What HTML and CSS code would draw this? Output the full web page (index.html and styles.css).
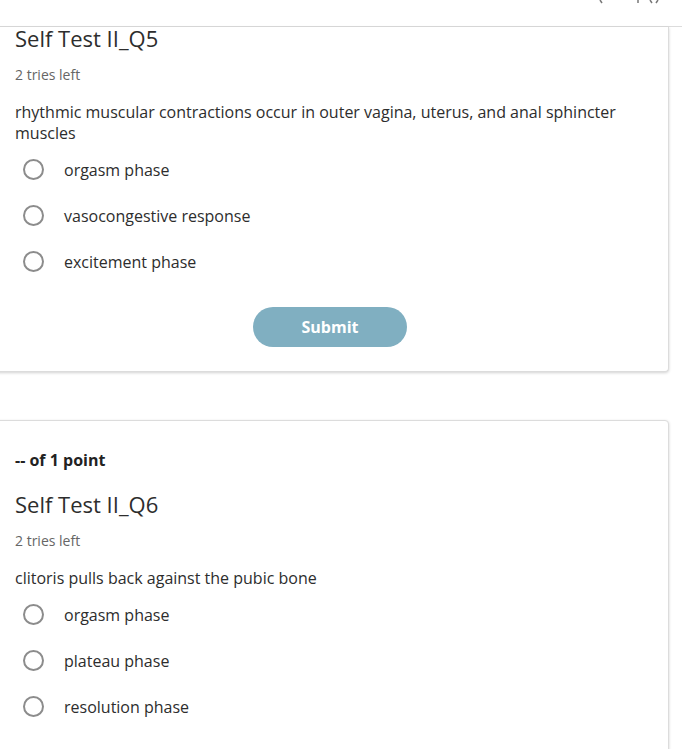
FILE: index.html
```html
<!DOCTYPE html>
<html lang="en">
<head>
<meta charset="utf-8">
<title>Self Test II</title>
<link rel="stylesheet" href="styles.css">
</head>
<body>
<header class="topbar">
  <svg class="topbar-icons" width="70" height="4" viewBox="0 0 70 4" aria-hidden="true">
    <path d="M8 0 L10 3" stroke="#777" stroke-width="1.5" fill="none"/>
    <path d="M46 0 L46 3" stroke="#777" stroke-width="1.5" fill="none"/>
    <path d="M58 0 L60 3 M64 3 L66 0" stroke="#777" stroke-width="1.5" fill="none"/>
  </svg>
</header>
<main class="quiz">
  <section class="card card-first">
    <h2 class="q-title q-title-first">Self Test II_Q5</h2>
    <p class="tries">2 tries left</p>
    <p class="question">rhythmic muscular contractions occur in outer vagina, uterus, and anal sphincter muscles</p>
    <ul class="options">
      <li class="option"><span class="radio"></span><span>orgasm phase</span></li>
      <li class="option"><span class="radio"></span><span>vasocongestive response</span></li>
      <li class="option"><span class="radio"></span><span>excitement phase</span></li>
    </ul>
    <div class="actions"><button class="submit" type="button">Submit</button></div>
  </section>
  <section class="card">
    <p class="points">-- of 1 point</p>
    <h2 class="q-title">Self Test II_Q6</h2>
    <p class="tries">2 tries left</p>
    <p class="question">clitoris pulls back against the pubic bone</p>
    <ul class="options">
      <li class="option"><span class="radio"></span><span>orgasm phase</span></li>
      <li class="option"><span class="radio"></span><span>plateau phase</span></li>
      <li class="option"><span class="radio"></span><span>resolution phase</span></li>
    </ul>
  </section>
</main>
</body>
</html>
```
FILE: styles.css
```css
* { box-sizing: border-box; }
html, body { margin: 0; padding: 0; background: #fff; }
body {
  font-family: "Open Sans", "Liberation Sans", sans-serif;
  color: #2d2d2d;
  overflow: hidden;
  height: 749px;
}
.topbar {
  height: 27px;
  border-bottom: 1px solid #dcdcdc;
  display: flex;
  justify-content: flex-end;
  align-items: flex-start;
  padding-right: 18px;
}
.topbar-icons { display: block; margin-right: 2px; }
.quiz {
  margin-left: -6px;
  width: 675px;
  display: flex;
  flex-direction: column;
  gap: 48px;
}
.card {
  background: #fff;
  border: 1px solid #dcdcdc;
  border-radius: 4px;
  box-shadow: 0 1px 3px rgba(0,0,0,0.18);
  padding: 0 20px 24px 20px;
}
.card-first {
  border-top: none;
  border-radius: 0 0 4px 4px;
  padding-bottom: 24px;
}
.q-title {
  margin: 0;
  font-size: 22px;
  font-weight: 400;
  line-height: 22px;
  color: #2d2d2d;
}
.q-title-first { margin-top: 0; }
.points {
  margin: 28px 0 0 0;
  font-size: 16px;
  font-weight: 700;
  line-height: 22px;
  color: #222;
}
.points + .q-title { margin-top: 22px; }
.tries {
  margin: 16px 0 0 0;
  font-size: 14px;
  line-height: 20px;
  color: #666;
}
.question {
  margin: 17px 0 0 0;
  font-size: 16px;
  line-height: 21px;
  color: #2d2d2d;
}
.options {
  list-style: none;
  margin: 3px 0 0 0;
  padding: 0;
}
.option {
  height: 46px;
  display: flex;
  align-items: center;
  font-size: 16px;
  line-height: 22px;
  color: #2d2d2d;
}
.radio {
  width: 21px;
  height: 21px;
  border: 2px solid #8c8c8c;
  border-radius: 50%;
  margin-left: 8px;
  margin-right: 20px;
  flex: none;
  position: relative;
  top: -1px;
}
.actions {
  display: flex;
  justify-content: center;
  margin-top: 22px;
}
.submit {
  width: 154px;
  height: 40px;
  border: none;
  border-radius: 20px;
  background: #80afc1;
  color: #fff;
  font-family: "Open Sans", "Liberation Sans", sans-serif;
  font-size: 16px;
  font-weight: 700;
  margin-left: -3px;
}
```
